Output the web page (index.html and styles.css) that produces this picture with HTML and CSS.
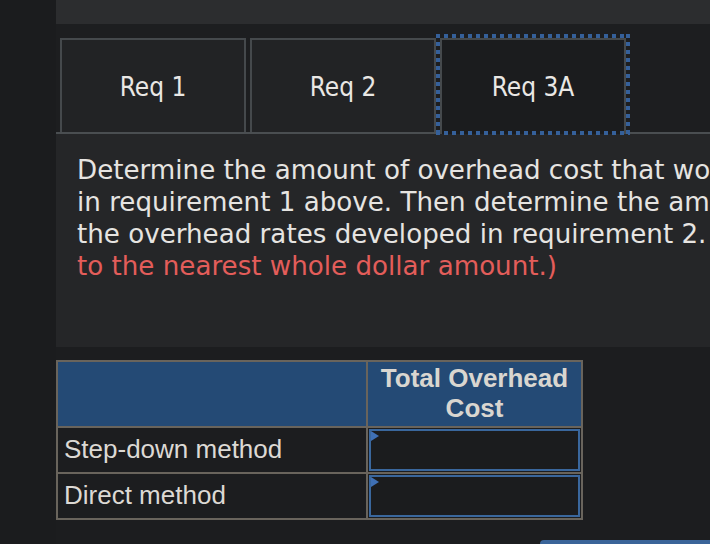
FILE: index.html
```html
<!DOCTYPE html>
<html lang="en">
<head>
<meta charset="utf-8">
<title>Req 3A</title>
<link rel="stylesheet" href="styles.css">
</head>
<body>
<div class="page">
  <aside class="sidebar"></aside>
  <main class="main">
    <div class="topbar"></div>
    <nav class="tabs">
      <div class="tab">Req 1</div>
      <div class="tab">Req 2</div>
      <div class="tab tab-active">Req 3A</div>
    </nav>
    <section class="panel">
      <p class="line">Determine the amount of overhead cost that would be assigned to each product line using the</p>
      <p class="line">in requirement 1 above. Then determine the amount of overhead cost using</p>
      <p class="line">the overhead rates developed in requirement 2. <span class="note">(Round your final answers</span></p>
      <p class="line note">to the nearest whole dollar amount.)</p>
    </section>
    <section class="work">
      <div class="grid">
        <div class="cell head"></div>
        <div class="cell head head-label">Total Overhead Cost</div>
        <div class="cell label">Step-down method</div>
        <div class="cell entry"><div class="input"></div></div>
        <div class="cell label">Direct method</div>
        <div class="cell entry"><div class="input"></div></div>
      </div>
      <div class="next-btn">Req 3B</div>
    </section>
  </main>
</div>
</body>
</html>
```

FILE: styles.css
```css
html, body {
  margin: 0;
  padding: 0;
}
body {
  width: 710px;
  height: 544px;
  overflow: hidden;
  background: #1b1c1e;
  font-family: "DejaVu Sans", Verdana, sans-serif;
}
.page {
  display: flex;
  width: 710px;
  height: 544px;
}
.sidebar {
  width: 56px;
  flex: none;
  background: #1b1c1e;
}
.main {
  width: 654px;
  flex: none;
  overflow: hidden;
  background: #1d1e20;
  display: flex;
  flex-direction: column;
}
.topbar {
  height: 24px;
  background: #2c2d2f;
  flex: none;
}
.tabs {
  display: flex;
  align-items: flex-end;
  gap: 4px;
  padding: 14px 0 0 4px;
  border-bottom: 2px solid #4a4e51;
  flex: none;
}
.tab {
  box-sizing: border-box;
  width: 186px;
  height: 94px;
  border: 2px solid #45494c;
  border-bottom: none;
  background: #222325;
  color: #e9e7e4;
  font-family: "DejaVu Sans Condensed", "DejaVu Sans", sans-serif;
  font-stretch: condensed;
  font-size: 26px;
  padding-top: 2px;
  display: flex;
  align-items: center;
  justify-content: center;
}
.tab-active {
  height: 96px;
  margin-bottom: -2px;
  padding-bottom: 2px;
  background: #1b1c1e;
  position: relative;
  z-index: 1;
}
.tab-active::after {
  content: "";
  position: absolute;
  top: -6px;
  left: -6px;
  right: -6px;
  bottom: -1px;
  pointer-events: none;
  background:
    repeating-linear-gradient(90deg, #35609a 0 4px, transparent 4px 8px) left top / 100% 4px no-repeat,
    repeating-linear-gradient(90deg, #35609a 0 4px, transparent 4px 8px) left bottom / 100% 4px no-repeat,
    repeating-linear-gradient(180deg, #35609a 0 4px, transparent 4px 8px) left top / 4px 100% no-repeat,
    repeating-linear-gradient(180deg, #35609a 0 4px, transparent 4px 8px) right top / 4px 100% no-repeat;
}
.panel {
  background: #252628;
  padding: 20px 0 65px 21px;
  overflow: hidden;
  flex: none;
}
.line {
  margin: 0;
  white-space: nowrap;
  font-size: 26.15px;
  line-height: 32px;
  color: #e6e4e1;
}
.note {
  color: #e35d5a;
}
.work {
  flex: 1;
  background: #1c1d1f;
  padding-top: 13px;
  display: flex;
  flex-direction: column;
}
.grid {
  display: grid;
  grid-template-columns: 308px 213px;
  grid-template-rows: 64px 44px 44px;
  gap: 2px;
  width: max-content;
  background: #69645c;
  border: 2px solid #69645c;
  font-family: "Liberation Sans", Arial, sans-serif;
}
.cell {
  background: #1c1d1f;
  color: #dcd9d4;
}
.head {
  background: #244a75;
}
.head-label {
  font-weight: bold;
  font-size: 26px;
  line-height: 29.5px;
  text-align: center;
  padding: 2px 6px 0;
  color: #d9d6d0;
}
.label {
  font-size: 26px;
  display: flex;
  align-items: center;
  padding-left: 6px;
  padding-bottom: 2px;
  box-sizing: border-box;
}
.entry {
  padding: 1px;
  display: flex;
}
.input {
  flex: 1;
  border: 2px solid #3a679d;
  background: #1b1c1e;
  position: relative;
}
.input::before {
  content: "";
  position: absolute;
  top: 0;
  left: 0;
  border-left: 8px solid #3f70b5;
  border-top: 5.5px solid transparent;
  border-bottom: 5.5px solid transparent;
}
.next-btn {
  margin: 20px 0 0 484px;
  width: 220px;
  height: 36px;
  background: #3a6499;
  border-radius: 4px 4px 0 0;
  color: #ffffff;
  font-size: 16px;
  line-height: 36px;
  text-align: center;
  flex: none;
}
```
